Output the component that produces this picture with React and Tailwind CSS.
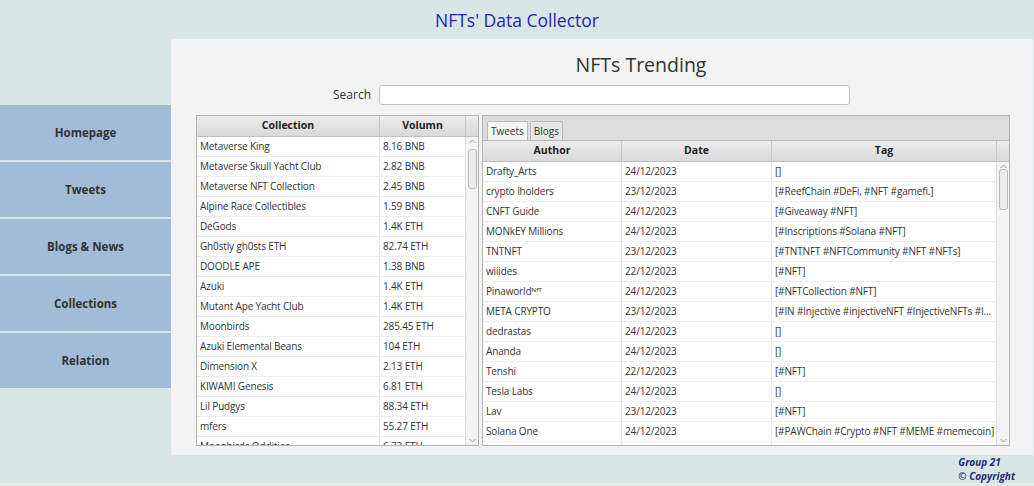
import React from 'react'

const collections = [
    ['Metaverse King', '8.16 BNB'],
    ['Metaverse Skull Yacht Club', '2.82 BNB'],
    ['Metaverse NFT Collection', '2.45 BNB'],
    ['Alpine Race Collectibles', '1.59 BNB'],
    ['DeGods', '1.4K ETH'],
    ['Gh0stly gh0sts ETH', '82.74 ETH'],
    ['DOODLE APE', '1.38 BNB'],
    ['Azuki', '1.4K ETH'],
    ['Mutant Ape Yacht Club', '1.4K ETH'],
    ['Moonbirds', '285.45 ETH'],
    ['Azuki Elemental Beans', '104 ETH'],
    ['Dimension X', '2.13 ETH'],
    ['KIWAMI Genesis', '6.81 ETH'],
    ['Lil Pudgys', '88.34 ETH'],
    ['mfers', '55.27 ETH'],
    ['Moonbirds Oddities', '6.73 ETH'],
];

const tweets = [
    ['Drafty_Arts', '24/12/2023', '[]'],
    ['crypto lholders', '23/12/2023', '[#ReefChain #DeFi, #NFT #gamefi.]'],
    ['CNFT Guide', '24/12/2023', '[#Giveaway #NFT]'],
    ['MONkEY Millions', '24/12/2023', '[#Inscriptions #Solana #NFT]'],
    ['TNTNFT', '23/12/2023', '[#TNTNFT #NFTCommunity #NFT #NFTs]'],
    ['wiiides', '22/12/2023', '[#NFT]'],
    ['Pinaworldᴺᶠᵀ', '24/12/2023', '[#NFTCollection #NFT]'],
    ['META CRYPTO', '23/12/2023', '[#IN #Injective #injectiveNFT #InjectiveNFTs #I...'],
    ['dedrastas', '24/12/2023', '[]'],
    ['Ananda', '24/12/2023', '[]'],
    ['Tenshi', '22/12/2023', '[#NFT]'],
    ['Tesla Labs', '24/12/2023', '[]'],
    ['Lav', '23/12/2023', '[#NFT]'],
    ['Solana One', '24/12/2023', '[#PAWChain #Crypto #NFT #MEME #memecoin]'],
    ['NFT Drops', '24/12/2023', '[#NFT]'],
];

const menu = ['Homepage', 'Tweets', 'Blogs & News', 'Collections', 'Relation'];

const font = { fontFamily: '"Open Sans", "Noto Sans", sans-serif' };

// Fake scroll bar column, like the JavaFX table
const ScrollBar = ({ thumbTop, thumbHeight }) => (
    <div className="relative w-[13px] shrink-0 bg-[#f4f4f4] border-l border-[#dcdcdc]">
        <svg className="absolute left-[3px] top-[2px]" width="7" height="5" viewBox="0 0 7 5">
            <path d="M0.5 4 L3.5 1 L6.5 4" fill="none" stroke="#9a9a9a" strokeWidth="1" />
        </svg>
        <div
            className="absolute left-[2px] w-[9px] rounded-[3px] border border-[#b9b9b9] bg-[#ececec]"
            style={{ top: thumbTop, height: thumbHeight }}
        />
        <svg className="absolute left-[3px] bottom-[2px]" width="7" height="5" viewBox="0 0 7 5">
            <path d="M0.5 1 L3.5 4 L6.5 1" fill="none" stroke="#9a9a9a" strokeWidth="1" />
        </svg>
    </div>
);

const HeadCell = ({ children, className = '' }) => (
    <div className={`flex items-center justify-center font-bold text-[10.5px] text-[#222] bg-gradient-to-b from-[#ececec] to-[#d9d9d9] border-r border-[#c8c8c8] ${className}`}>
        {children}
    </div>
);

const cell = 'pl-[3px] flex items-center whitespace-nowrap overflow-hidden';

export default function App() {
    return (
        <div className="w-[1034px] h-[486px] bg-[#d9e6e6] flex flex-col overflow-hidden" style={font}>
            {/* header */}
            <div className="h-[39px] shrink-0 flex items-center justify-center">
                <h1 className="text-[17.5px] text-[#2424b4] leading-none pt-[2px]">NFTs' Data Collector</h1>
            </div>

            <div className="flex h-[416px] shrink-0">
                {/* sidebar */}
                <div className="w-[171px] shrink-0 pt-[66px] flex flex-col gap-[2px]">
                    {menu.map(item => (
                        <div key={item} className="h-[55px] bg-[#a2bcd8] flex items-center justify-center text-[11.5px] font-bold text-[#333]">
                            {item}
                        </div>
                    ))}
                </div>

                {/* main panel */}
                <div className="w-[862px] bg-[#f3f3f3] flex flex-col">
                    <div className="h-[36px] flex items-end justify-center pl-[78px]">
                        <h2 className="text-[19.5px] text-[#333] leading-none pb-[1px]">NFTs Trending</h2>
                    </div>
                    <div className="h-[20px] mt-[10px] flex items-center pl-[162px] gap-[8px]">
                        <span className="text-[12px] text-[#333]">Search</span>
                        <input className="w-[471px] h-[20px] bg-white border border-[#c4c4c4] rounded-[3px] outline-none" />
                    </div>

                    <div className="flex pl-[25px] gap-[3px] mt-[10px]">
                        {/* collections table */}
                        <div className="w-[283px] h-[331px] border border-[#b4b4b4] bg-white flex flex-col">
                            <div className="h-[21px] shrink-0 flex border-b border-[#c0c0c0]">
                                <HeadCell className="w-[183px]">Collection</HeadCell>
                                <HeadCell className="w-[86px]">Volumn</HeadCell>
                                <HeadCell className="flex-1 border-r-0" />
                            </div>
                            <div className="flex flex-1 overflow-hidden">
                                <div className="flex-1 overflow-hidden">
                                    {collections.map(([name, vol]) => (
                                        <div key={name} className="h-[20px] flex text-[10px] tracking-[-0.15px] text-[#333] border-b border-[#ededed]">
                                            <div className={`w-[183px] border-r border-[#e4e4e4] ${cell}`}>{name}</div>
                                            <div className={`flex-1 ${cell}`}>{vol}</div>
                                        </div>
                                    ))}
                                </div>
                                <ScrollBar thumbTop={12} thumbHeight={40} />
                            </div>
                        </div>

                        {/* tab pane */}
                        <div className="w-[528px] h-[331px] border border-[#b4b4b4] bg-[#dddddd] flex flex-col">
                            <div className="h-[24px] shrink-0 flex items-end gap-[2px] pl-[4px]">
                                <div className="h-[19px] px-[3px] flex items-center text-[10px] text-[#333] bg-[#f4f4f4] border border-b-0 border-[#b8b8b8] rounded-t-[2px]">Tweets</div>
                                <div className="h-[19px] px-[3px] flex items-center text-[10px] text-[#333] bg-[#e6e6e6] border border-b-0 border-[#b8b8b8] rounded-t-[2px]">Blogs</div>
                            </div>
                            <div className="flex-1 flex flex-col bg-white border-t border-[#b8b8b8] overflow-hidden">
                                <div className="h-[21px] shrink-0 flex border-b border-[#c0c0c0]">
                                    <HeadCell className="w-[139px]">Author</HeadCell>
                                    <HeadCell className="w-[150px]">Date</HeadCell>
                                    <HeadCell className="w-[225px]">Tag</HeadCell>
                                    <HeadCell className="flex-1 border-r-0" />
                                </div>
                                <div className="flex flex-1 overflow-hidden">
                                    <div className="flex-1 overflow-hidden">
                                        {tweets.map(([author, date, tag], i) => (
                                            <div key={i} className="h-[20px] flex text-[10px] tracking-[-0.15px] text-[#333] border-b border-[#ededed]">
                                                <div className={`w-[139px] border-r border-[#e4e4e4] ${cell}`}>{author}</div>
                                                <div className={`w-[150px] border-r border-[#e4e4e4] ${cell}`}>{date}</div>
                                                <div className={`flex-1 ${cell}`}>{tag}</div>
                                            </div>
                                        ))}
                                    </div>
                                    <ScrollBar thumbTop={7} thumbHeight={41} />
                                </div>
                            </div>
                        </div>
                    </div>
                </div>
            </div>

            {/* footer */}
            <div className="flex-1 flex justify-end pr-[19px] bg-[#d9e6e6]">
                <div className="text-[10px] font-bold italic text-[#1f2b84] leading-[14px]">
                    <div>Group 21</div>
                    <div>© Copyright</div>
                </div>
            </div>
            <div className="h-[3px] shrink-0 bg-[#ece8e2]" />
        </div>
    )
}
